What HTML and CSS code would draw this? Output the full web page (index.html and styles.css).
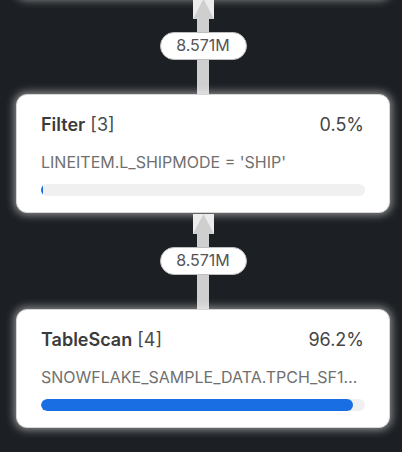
FILE: index.html
```html
<!DOCTYPE html>
<html lang="en">

<head>
  <meta charset="UTF-8">
  <meta name="viewport" content="width=device-width, initial-scale=1.0">
  <title>Query Profile</title>
  <link rel="stylesheet" href="styles.css">
</head>

<body>
  <div class="plan">
    <!-- Parent node, scrolled out of view -->
    <div class="node node-first"></div>

    <div class="edge">
      <svg class="arrow-head" width="21" height="20" viewBox="0 0 21 20">
        <rect width="21" height="20" fill="#ececec" />
        <polygon points="10.5,0 0,20 21,20" fill="#cfcfcf" />
      </svg>
      <div class="shaft shaft-short"></div>
      <div class="rows-pill">8.571M</div>
      <div class="shaft shaft-long"></div>
    </div>

    <!-- Filter node -->
    <div class="node">
      <div class="node-head">
        <span class="node-name"><b>Filter</b> [3]</span>
        <span class="node-pct">0.5%</span>
      </div>
      <div class="node-detail">LINEITEM.L_SHIPMODE = 'SHIP'</div>
      <div class="bar"><div class="bar-fill" style="width: 0.5%"></div></div>
    </div>

    <div class="edge">
      <svg class="arrow-head" width="21" height="20" viewBox="0 0 21 20">
        <rect width="21" height="20" fill="#ececec" />
        <polygon points="10.5,0 0,20 21,20" fill="#cfcfcf" />
      </svg>
      <div class="shaft shaft-short"></div>
      <div class="rows-pill">8.571M</div>
      <div class="shaft shaft-long"></div>
    </div>

    <!-- TableScan node -->
    <div class="node">
      <div class="node-head">
        <span class="node-name"><b>TableScan</b> [4]</span>
        <span class="node-pct">96.2%</span>
      </div>
      <div class="node-detail">SNOWFLAKE_SAMPLE_DATA.TPCH_SF100.LINEITEM</div>
      <div class="bar"><div class="bar-fill" style="width: 96.2%"></div></div>
    </div>
  </div>
</body>

</html>
```

FILE: styles.css
```css
/* Page setup */
body {
  margin: 0;
  height: 452px;
  overflow: hidden;
  background: #1c1f23;
  font-family: 'Inter', 'Noto Sans', sans-serif;
}

.plan {
  display: flex;
  flex-direction: column;
  align-items: center;
  width: 374px;
  margin-left: 16px;
}

/* Operator cards */
.node {
  box-sizing: border-box;
  width: 374px;
  height: 119px;
  padding: 18px 24px 0;
  background: #fff;
  border: 1px solid #d6d6d6;
  border-radius: 11px;
  box-shadow: 0 0 8px 2px rgba(255, 255, 255, 0.5);
}

.node-first {
  margin-top: -121px;
}

.node-head {
  display: flex;
  justify-content: space-between;
  align-items: baseline;
  font-size: 18px;
  line-height: 24px;
  color: #4a4a4a;
  padding-right: 1px;
}

.node-name b {
  font-weight: 600;
  color: #3b3b3b;
}

.node-pct {
  color: #454545;
}

.node-detail {
  margin-top: 15px;
  font-size: 16px;
  line-height: 20px;
  color: #707070;
  white-space: nowrap;
  overflow: hidden;
  text-overflow: ellipsis;
}

.bar {
  margin-top: 12px;
  height: 12px;
  border-radius: 6px;
  background: #f0f0f0;
  overflow: hidden;
}

.bar-fill {
  height: 100%;
  min-width: 2px;
  border-radius: 6px;
  background: #1a6ee3;
}

/* Edges between operators */
.edge {
  display: flex;
  flex-direction: column;
  align-items: center;
  height: 96px;
}

.arrow-head {
  display: block;
  margin-top: 1px;
}

.shaft {
  width: 12px;
  background: #cfcfcf;
}

.shaft-short {
  height: 13px;
}

.shaft-long {
  flex: 1;
}

.rows-pill {
  box-sizing: border-box;
  width: 87px;
  height: 28px;
  border: 1.5px solid #bdbdbd;
  border-radius: 14px;
  background: #fff;
  font-size: 16px;
  line-height: 25px;
  text-align: center;
  color: #555;
}
```
